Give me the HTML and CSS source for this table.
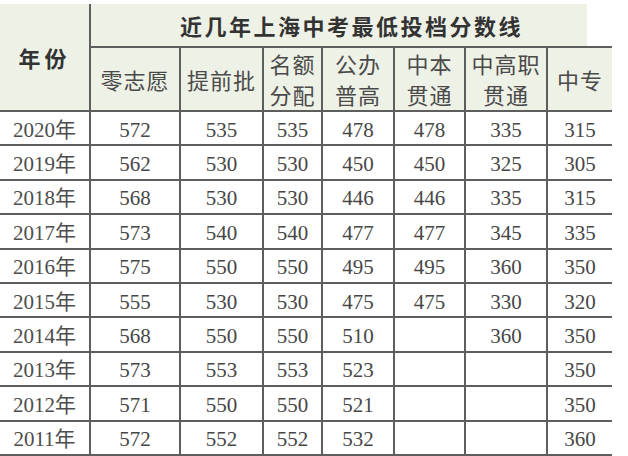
FILE: index.html
```html
<!DOCTYPE html>
<html lang="zh-CN">
<head>
<meta charset="utf-8">
<title>近几年上海中考最低投档分数线</title>
<link rel="stylesheet" href="styles.css">
</head>
<body>
<div class="page">
<table class="scores">
  <colgroup>
    <col class="c-year"><col class="c-a"><col class="c-b"><col class="c-c"><col class="c-d"><col class="c-e"><col class="c-f"><col class="c-g">
  </colgroup>
  <thead>
    <tr class="title-row">
      <th class="year-head" rowspan="2">年份</th>
      <th class="title" colspan="7">近几年上海中考最低投档分数线</th>
    </tr>
    <tr class="col-row">
      <th class="col-head">零志愿</th>
      <th class="col-head">提前批</th>
      <th class="col-head two">名额<br>分配</th>
      <th class="col-head two">公办<br>普高</th>
      <th class="col-head two">中本<br>贯通</th>
      <th class="col-head two">中高职<br>贯通</th>
      <th class="col-head">中专</th>
    </tr>
  </thead>
  <tbody>
    <tr><td>2020年</td><td>572</td><td>535</td><td>535</td><td>478</td><td>478</td><td>335</td><td>315</td></tr>
    <tr><td>2019年</td><td>562</td><td>530</td><td>530</td><td>450</td><td>450</td><td>325</td><td>305</td></tr>
    <tr><td>2018年</td><td>568</td><td>530</td><td>530</td><td>446</td><td>446</td><td>335</td><td>315</td></tr>
    <tr><td>2017年</td><td>573</td><td>540</td><td>540</td><td>477</td><td>477</td><td>345</td><td>335</td></tr>
    <tr><td>2016年</td><td>575</td><td>550</td><td>550</td><td>495</td><td>495</td><td>360</td><td>350</td></tr>
    <tr><td>2015年</td><td>555</td><td>530</td><td>530</td><td>475</td><td>475</td><td>330</td><td>320</td></tr>
    <tr><td>2014年</td><td>568</td><td>550</td><td>550</td><td>510</td><td></td><td>360</td><td>350</td></tr>
    <tr><td>2013年</td><td>573</td><td>553</td><td>553</td><td>523</td><td></td><td></td><td>350</td></tr>
    <tr><td>2012年</td><td>571</td><td>550</td><td>550</td><td>521</td><td></td><td></td><td>350</td></tr>
    <tr class="last"><td>2011年</td><td>572</td><td>552</td><td>552</td><td>532</td><td class="faint-top"></td><td class="faint-top faint-left"></td><td class="faint-top faint-left">360</td></tr>
  </tbody>
</table>
</div>
</body>
</html>
```

FILE: styles.css
```css
html, body {
  margin: 0;
  padding: 0;
  background: #ffffff;
}

.page {
  width: 628px;
  height: 456px;
  padding-top: 4px;
  box-sizing: border-box;
  overflow: hidden;
}

.scores {
  border-collapse: collapse;
  table-layout: fixed;
  width: 612px;
  font-family: "Liberation Serif", "Noto Sans CJK SC", serif;
  color: #454545;
}

.c-year { width: 90px; }
.c-a { width: 90px; }
.c-b { width: 83px; }
.c-c { width: 59px; }
.c-d { width: 72px; }
.c-e { width: 71px; }
.c-f { width: 82px; }
.c-g { width: 65px; }

.scores th,
.scores td {
  border: 2px solid #5e5e5e;
  padding: 0;
  text-align: center;
  vertical-align: middle;
}

/* no outer frame except the bottom line */
.scores tr > :first-child { border-left: none; }
.scores tr > :last-child { border-right: none; }
.scores thead tr:first-child > th { border-top: none; }
.scores .year-head { border-left: none; }

.title-row { height: 43px; }
.col-row { height: 63px; }

.year-head {
  background: #eef1e6;
  font-family: "Noto Sans CJK SC", sans-serif;
  font-weight: 700;
  font-size: 22px;
  letter-spacing: 4px;
  color: #333333;
  padding-top: 2px;
}

.title {
  background: linear-gradient(to right, #eef1e6 0, #eef1e6 496px, #ffffff 496px);
  font-family: "Noto Sans CJK SC", sans-serif;
  font-weight: 700;
  font-size: 22px;
  letter-spacing: 2.5px;
  color: #333333;
  padding-top: 3px;
  line-height: 30px;
}

.col-head {
  background: #eef1e6;
  font-family: "Noto Sans CJK SC", sans-serif;
  font-weight: 400;
  font-size: 22px;
  letter-spacing: 1px;
  color: #4a4a4a;
  line-height: 31px;
  padding-top: 5px;
}

.scores tbody tr { height: 34.4px; }

.scores tbody td {
  font-size: 21px;
  line-height: 24px;
  padding-top: 3px;
  color: #474747;
}

.scores tbody td:first-child {
  color: #4d4d4d;
}

.scores tbody td.faint-top { border-top-color: #e4e4e4; }
.scores tbody td.faint-left { border-left-color: #cfcfcf; }
```
